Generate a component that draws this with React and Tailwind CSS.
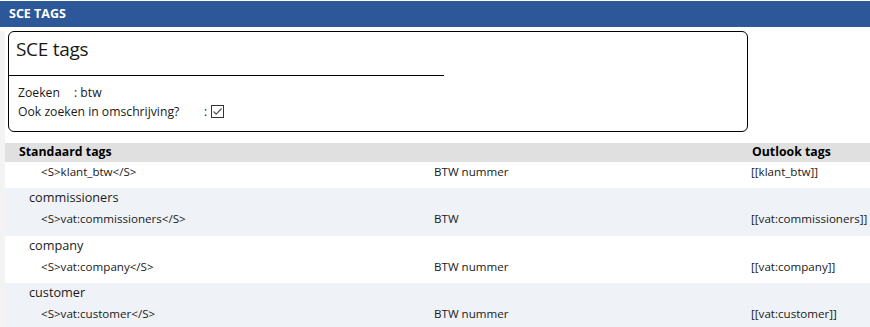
const groups = [
  { name: "commissioners", tag: "<S>vat:commissioners</S>", desc: "BTW", outlook: "[[vat:commissioners]]" },
  { name: "company", tag: "<S>vat:company</S>", desc: "BTW nummer", outlook: "[[vat:company]]" },
  { name: "customer", tag: "<S>vat:customer</S>", desc: "BTW nummer", outlook: "[[vat:customer]]" },
];

const App = () => {
  return (
    <div className="w-[870px] h-[327px] overflow-hidden bg-white text-[#1a1a1a] font-['Open_Sans',sans-serif]">
      {/* title bar */}
      <div className="mt-px h-[26px] bg-[#2c5899] flex items-center pl-[9px]">
        <span className="text-white font-bold text-[12.5px]">SCE TAGS</span>
      </div>

      <div className="border-l-[5px] border-[#f3f3f3]">
        {/* search card */}
        <div className="ml-[3px] mt-1 w-[740px] h-[101px] border border-black rounded-[6px]">
          <div className="h-[44px] w-[435px] border-b border-black pl-[7px] pt-[5px]">
            <h1 className="text-[19px] leading-[24px] tracking-[-0.3px]">SCE tags</h1>
          </div>
          <div className="pl-[9px] pt-[7px] text-[12.2px] leading-[19px]">
            <div className="flex">
              <span className="w-[56px]">Zoeken</span>
              <span>: btw</span>
            </div>
            <div className="flex items-center">
              <span className="w-[186px]">Ook zoeken in omschrijving?</span>
              <span>:</span>
              <span className="ml-[4px] w-[13px] h-[13px] border border-[#333] flex items-center justify-center">
                <svg width="11" height="11" viewBox="0 0 11 11">
                  <path d="M1.5 5.5 L4.2 8.2 L9.5 2.5" fill="none" stroke="#555" strokeWidth="1.2" />
                </svg>
              </span>
            </div>
          </div>
        </div>

        {/* table */}
        <div className="mt-[11px] text-[11.6px]">
          <div className="grid grid-cols-[429px_317px_1fr] h-[19px] items-center bg-[#e0e0e0] font-bold text-[12.3px] text-black">
            <span className="pl-[14px]">Standaard tags</span>
            <span></span>
            <span className="pl-[1px]">Outlook tags</span>
          </div>
          <div className="h-[26px]">
            <div className="grid grid-cols-[429px_317px_1fr] h-[20px] items-center">
              <span className="pl-[36px]">&lt;S&gt;klant_btw&lt;/S&gt;</span>
              <span>BTW nummer</span>
              <span>[[klant_btw]]</span>
            </div>
          </div>
          {groups.map((g, i) => (
            <div key={g.name} className={i % 2 === 0 ? "bg-[#eff2f6] h-[48px]" : "bg-white h-[47px]"}>
              <div className="pl-[24px] h-[20px] flex items-center text-[12.7px]">{g.name}</div>
              <div className="grid grid-cols-[429px_317px_1fr] h-[21px] items-center">
                <span className="pl-[36px]">{g.tag}</span>
                <span>{g.desc}</span>
                <span>{g.outlook}</span>
              </div>
            </div>
          ))}
        </div>
      </div>
    </div>
  );
};

export default App;
